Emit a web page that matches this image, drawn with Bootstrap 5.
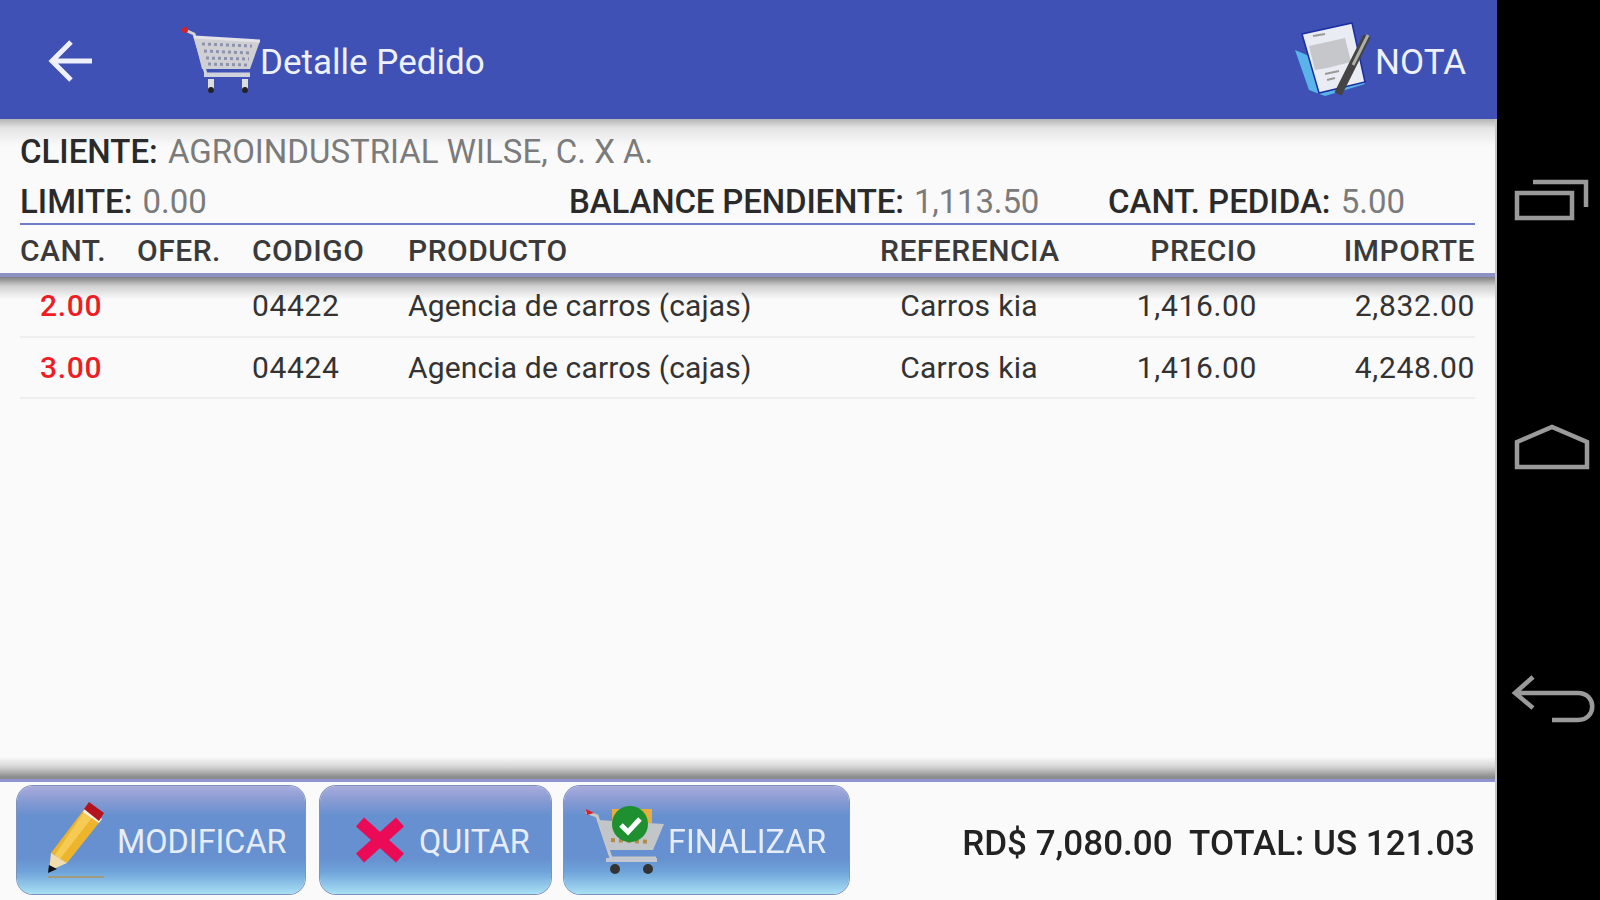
<!DOCTYPE html>
<html lang="es">
<head>
  <meta charset="UTF-8" />
  <title>Detalle Pedido</title>
  <link href="https://cdn.jsdelivr.net/npm/bootstrap@5.3.3/dist/css/bootstrap.min.css" rel="stylesheet" />
  <style>
    html, body { height: 100%; }
    body { background: #000; font-family: Roboto, "Liberation Sans", sans-serif; overflow: hidden; }
    .screen { width: 1600px; height: 900px; filter: blur(0.6px); }
    .main-col { width: 1497px; flex: none; background: #fafafa; }
    .body-wrap { border-right: 2px solid #c4c4c4; min-height: 0; }
    .side-col { width: 103px; flex: none; padding: 170px 0 0 9px; gap: 189px; }
    .side-col svg { display: block; }

    .app-bar { height: 119px; background: #3f51b5; padding-right: 31px; flex: none; }
    .bar-back { margin-left: 48px; margin-top: 2px; }
    .bar-cart { margin-left: 88px; }
    .bar-title { font-size: 35px; line-height: 1; color: #eef0fb; margin-top: 6px; }

    .info-box { padding: 0 20px; height: 106px; flex: none; background: linear-gradient(#b4b4b4 0, #e4e4e4 9px, #fafafa 27px); }
    .info-line { font-size: 33px; line-height: 36px; color: #2a2a2a; font-weight: 500; }
    .info-line span { font-weight: 400; color: #7b7b7b; margin-left: 2px; }
    .line-client { padding-top: 15px; height: 65px; }
    .line-totals { height: 41px; padding-bottom: 3px; border-bottom: 2px solid #6f7cc6; display: grid; grid-template-columns: 549px 539px auto; }
    .cell-balance { letter-spacing: -.15px; }

    .grid-row { display: grid; grid-template-columns: 117px 115px 156px 472px 178px 199px 218px; margin: 0 20px; align-items: center; }
    .head-row { height: 48px; padding-top: 2px; font-size: 30px; letter-spacing: .5px; font-weight: 500; color: #3a3a3a; flex: none; }
    .head-line { height: 4px; background: #8f93c4; flex: none; }
    .list-area { background: linear-gradient(#808080 0, #d0d0d0 9px, #fafafa 22px) no-repeat top / 100% 24px; }
    .item-row { height: 61px; font-size: 30px; letter-spacing: .65px; color: #333; border-bottom: 2px solid #eeeeee; }
    .item-row:first-child { padding-bottom: 2px; }
    .qty { color: #f01c24; font-weight: 500; padding-left: 20px; }
    .cell-prod { letter-spacing: .15px; }
    .cell-ref { letter-spacing: .3px; }

    .foot-shadow { height: 22px; flex: none; background: linear-gradient(#fafafa 0, #d4d4d4 10px, #8c8c8c 20px); }
    .foot-line { height: 3px; background: #8f93cf; flex: none; }
    .foot-bar { height: 118px; padding: 4px 20px 4px 17px; flex: none; }
    .act-btn { height: 108px; border: 0; border-radius: 16px; padding: 0; color: #e6edf8; font-size: 32.4px; box-shadow: 0 0 0 1px #7d93bd;
      background: linear-gradient(#a9acdc 0, #8d9dd4 12px, #6690cf 30px, #6690cf 72px, #6fa4da 86px, #a8e0f4 100%); }
    .act-btn:hover { color: #e6edf8; background: linear-gradient(#a9acdc 0, #8d9dd4 12px, #6690cf 30px, #6690cf 72px, #6fa4da 86px, #a8e0f4 100%); }
    .act-btn span { margin-top: 5px; }
    .btn-mod { width: 288px; margin-right: 15px; padding-left: 31px; gap: 13px; }
    .btn-del { width: 231px; margin-right: 13px; padding-left: 35px; gap: 14px; }
    .btn-fin { width: 285px; padding-left: 20px; gap: 4px; }
    .total-text { font-size: 35px; font-weight: 500; color: #222; white-space: pre; margin-top: 6px; }
  </style>
</head>
<body>
  <div class="screen d-flex">
    <div class="main-col d-flex flex-column">
      <div class="app-bar d-flex align-items-center">
        <svg class="bar-back" width="46" height="42" viewBox="0 0 46 42" fill="none" stroke="#eef0fb" stroke-width="5"><path d="M3 21H44M23 2 4 21l19 19"/></svg>
        <svg class="bar-cart" width="78" height="66" viewBox="0 0 78 66">
          <path d="M3 3 12 7 24 47H68" fill="none" stroke="#d5d5d5" stroke-width="3"/>
          <path d="M12 10 78 14 68 42 20 42Z" fill="#cfcfd4"/>
          <path d="M20 17 70 19M22 24 69 26M24 31 67 32M26 37 65 38" stroke="#8d93ad" stroke-width="3" stroke-dasharray="3 3" fill="none"/>
          <path d="M12 10 78 14" stroke="#e4e4e8" stroke-width="3"/>
          <path d="M22 48H68" stroke="#cfd2dc" stroke-width="4"/>
          <circle cx="3" cy="3" r="3" fill="#d5202a"/>
          <rect x="26" y="52" width="6" height="12" fill="#ddd"/><rect x="60" y="52" width="6" height="12" fill="#ddd"/>
          <circle cx="29" cy="63" r="3" fill="#222"/><circle cx="63" cy="63" r="3" fill="#222"/>
        </svg>
        <span class="bar-title">Detalle Pedido</span>
        <svg class="ms-auto" width="76" height="76" viewBox="0 0 76 76">
          <path d="M0 28 14 68 30 74 70 62 66 56Z" fill="#5ab4ea"/>
          <path d="M7 12 57 1 70 60 24 71Z" fill="#e9ecf2" stroke="#1a2fa0" stroke-width="1.5"/>
          <path d="M14 24 50 16 56 40 32 46 20 48Z" fill="#c6c7cb"/>
          <path d="M18 14 30 12M30 52 44 49M32 58 40 56" stroke="#9a9a9a" stroke-width="2"/>
          <path d="M72 14 43 72" stroke="#444" stroke-width="8"/>
          <path d="M73 13 58 43" stroke="#aeb0a8" stroke-width="3"/>
        </svg>
        <span class="bar-title ps-1">NOTA</span>
      </div>

      <div class="body-wrap d-flex flex-column flex-grow-1">
        <div class="info-box">
          <div class="info-line line-client">CLIENTE:&nbsp;<span>AGROINDUSTRIAL WILSE, C. X A.</span></div>
          <div class="info-line line-totals">
            <div>LIMITE: <span>0.00</span></div>
            <div class="cell-balance">BALANCE PENDIENTE: <span>1,113.50</span></div>
            <div>CANT. PEDIDA: <span>5.00</span></div>
          </div>
        </div>

        <div class="grid-row head-row">
          <div>CANT.</div>
          <div>OFER.</div>
          <div>CODIGO</div>
          <div>PRODUCTO</div>
          <div class="text-center">REFERENCIA</div>
          <div class="text-end">PRECIO</div>
          <div class="text-end">IMPORTE</div>
        </div>
        <div class="head-line"></div>

        <div class="list-area flex-grow-1">
          <div class="grid-row item-row">
            <div class="qty">2.00</div><div></div><div>04422</div><div class="cell-prod">Agencia de carros (cajas)</div>
            <div class="text-center cell-ref">Carros kia</div><div class="text-end">1,416.00</div><div class="text-end">2,832.00</div>
          </div>
          <div class="grid-row item-row">
            <div class="qty">3.00</div><div></div><div>04424</div><div class="cell-prod">Agencia de carros (cajas)</div>
            <div class="text-center cell-ref">Carros kia</div><div class="text-end">1,416.00</div><div class="text-end">4,248.00</div>
          </div>
        </div>

        <div class="foot-shadow"></div>
        <div class="foot-line"></div>
        <div class="foot-bar d-flex align-items-start">
          <button type="button" class="btn act-btn btn-mod d-flex align-items-center">
            <svg width="56" height="78" viewBox="0 0 56 78">
              <path d="M38 6 54 18 19 62 3 52Z" fill="#edb52c"/>
              <path d="M38 8 46 14 12 58 7 54Z" fill="#f5cb55"/>
              <path d="M3 52 19 62 1 70Z" fill="#f1dcae"/>
              <path d="M1 64 9 68 0 72Z" fill="#111"/>
              <path d="M35 11 51 22 54 18 38 6Z" fill="#f3f0e6"/>
              <path d="M36 8 41 1 56 12 51 20Z" fill="#b5141f"/>
              <path d="M0 76H62" stroke="#a09a80" stroke-width="2"/>
            </svg>
            <span>MODIFICAR</span>
          </button>
          <button type="button" class="btn act-btn btn-del d-flex align-items-center">
            <svg width="50" height="48" viewBox="0 0 50 48"><path d="M5 6 45 42M45 6 5 42" stroke="#ea0a55" stroke-width="12"/></svg>
            <span>QUITAR</span>
          </button>
          <button type="button" class="btn act-btn btn-fin d-flex align-items-center">
            <svg width="80" height="72" viewBox="0 0 80 72">
              <path d="M2 8 13 12 27 54H72" fill="none" stroke="#c8c8c8" stroke-width="3"/>
              <path d="M14 16 80 20 69 46 24 46Z" fill="#c3c6c8"/>
              <path d="M27 36 67 38" stroke="#b28a4a" stroke-width="4" stroke-dasharray="4 4"/>
              <rect x="28" y="5" width="40" height="14" fill="#e5ae3e"/>
              <path d="M2 5 10 9 3 11Z" fill="#d5202a"/>
              <circle cx="46" cy="20" r="18" fill="#1e9030"/>
              <path d="M37 21 44 28 56 15" fill="none" stroke="#fff" stroke-width="5"/>
              <path d="M22 56H73" stroke="#c4c7d0" stroke-width="4"/>
              <circle cx="31" cy="65" r="5" fill="#333"/><circle cx="64" cy="65" r="5" fill="#333"/>
            </svg>
            <span>FINALIZAR</span>
          </button>
          <div class="total-text ms-auto align-self-center">RD$ 7,080.00  TOTAL: US 121.03</div>
        </div>
      </div>
    </div>

    <div class="side-col d-flex flex-column align-items-center">
      <svg width="84" height="60" viewBox="0 0 84 60" fill="none" stroke="#9a9a9a" stroke-width="4.5"><path d="M6 23H61V48H6ZM22 12H75V37"/></svg>
      <svg width="84" height="60" viewBox="0 0 84 60" fill="none" stroke="#9a9a9a" stroke-width="4.5"><path d="M6 23 41 8 76 23V48H6Z"/></svg>
      <svg width="84" height="60" viewBox="0 0 84 60" fill="none" stroke="#9a9a9a" stroke-width="4.5"><path d="M22 9 4 25l18 15M4 25H67C86 25 86 52 67 52H41"/></svg>
    </div>
  </div>
  <script src="https://cdn.jsdelivr.net/npm/bootstrap@5.3.3/dist/js/bootstrap.bundle.min.js"></script>
</body>
</html>
